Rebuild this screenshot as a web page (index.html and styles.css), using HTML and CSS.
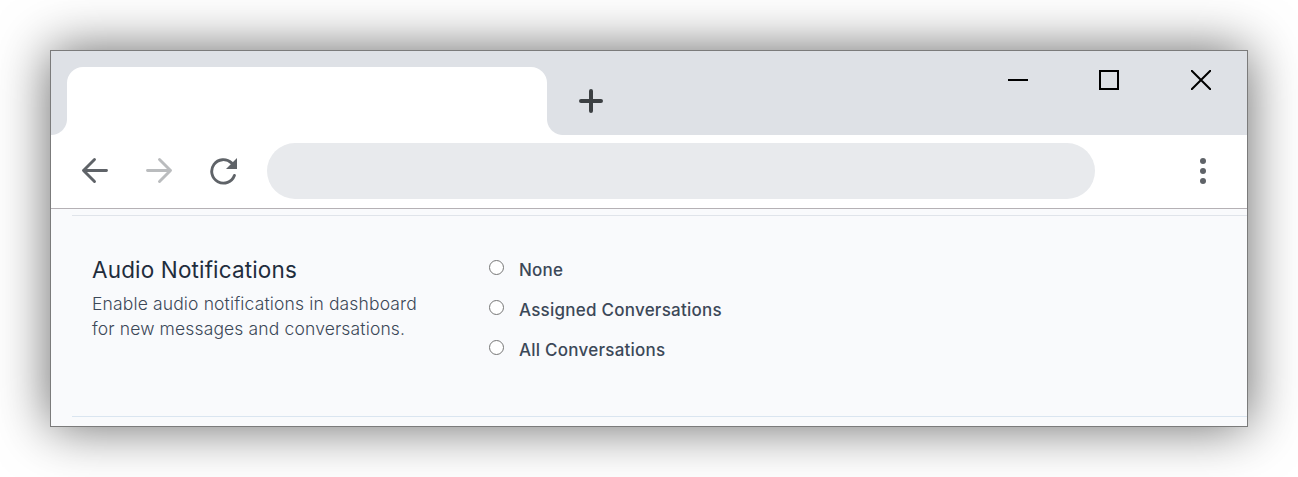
FILE: index.html
```html
<!DOCTYPE html>
<html lang="en">
<head>
<meta charset="utf-8">
<title>Audio Notifications</title>
<link rel="stylesheet" href="styles.css">
</head>
<body>
<div class="window">
  <div class="tabstrip">
    <div class="tab"></div>
    <svg class="new-tab" width="24" height="24" viewBox="0 0 24 24"><path d="M12 2v20M2 12h20"/></svg>
    <div class="controls">
      <svg width="20" height="20" viewBox="0 0 20 20"><path d="M0 10h20"/></svg>
      <svg width="20" height="20" viewBox="0 0 20 20"><path d="M1 1h18v18H1z"/></svg>
      <svg class="close" width="20" height="20" viewBox="0 0 20 20"><path d="M0 0l20 20M20 0L0 20"/></svg>
    </div>
  </div>
  <div class="toolbar">
    <svg class="nav" width="28" height="28" viewBox="0 0 28 28"><path d="M13.500 2.500L2.500 13.500l11 11M2.500 13.500h23"/></svg>
    <svg class="nav disabled" width="28" height="28" viewBox="0 0 28 28"><path d="M14.500 2.500L25.500 13.500l-11 11M25.500 13.500H2.500"/></svg>
    <svg class="nav" width="28" height="28" viewBox="0 0 28 28"><path d="M25.400 18.400A11.700 11.700 0 1 1 22.500 5.900"/><path class="head" d="M28 1v11H17z"/></svg>
    <div class="address"></div>
    <svg class="more" width="6" height="26" viewBox="0 0 6 26"><circle cx="3" cy="3" r="3"/><circle cx="3" cy="13" r="3"/><circle cx="3" cy="23" r="3"/></svg>
  </div>
  <div class="page">
    <section class="setting">
      <div class="about">
        <h4>Audio Notifications</h4>
        <p>Enable audio notifications in dashboard<br>for new messages and conversations.</p>
      </div>
      <div class="options">
        <label><span class="radio"></span><span>None</span></label>
        <label><span class="radio"></span><span>Assigned Conversations</span></label>
        <label><span class="radio"></span><span>All Conversations</span></label>
      </div>
    </section>
  </div>
</div>
</body>
</html>
```
FILE: styles.css
```css
* { box-sizing: border-box; }
body { margin: 0; padding: 50px; height: 477px; overflow: hidden; background: #fff; font-family: Inter, "Liberation Sans", sans-serif; }
svg { display: block; flex: none; }
.window { width: 1198px; height: 377px; border: 1px solid #7b7b7b; background: #f9fafc; box-shadow: 0 0 50px rgba(0,0,0,.6); display: flex; flex-direction: column; }
.tabstrip { height: 84px; flex: none; background: #dee1e6; display: flex; align-items: flex-start; padding: 16px 36px 0 16px; overflow: hidden; }
.tab { position: relative; width: 480px; height: 68px; background: #fff; border-radius: 16px 16px 0 0; }
.tab::before, .tab::after { content: ""; position: absolute; bottom: 0; width: 16px; height: 16px; }
.tab::before { left: -16px; background: radial-gradient(circle at 0 0, transparent 15.500px, #fff 16.500px); }
.tab::after { right: -16px; background: radial-gradient(circle at 100% 0, transparent 15.500px, #fff 16.500px); }
.new-tab { margin: 22px 0 0 32px; fill: none; stroke: #3c4043; stroke-width: 4; stroke-linecap: round; }
.controls { margin: 3px 0 0 auto; display: flex; gap: 71px; fill: none; stroke: #000; stroke-width: 2; }
.close { margin-left: 1px; }
.toolbar { height: 74px; flex: none; background: #fff; border-bottom: 1px solid #b5b1b5; display: flex; align-items: flex-start; padding: 8px 41px 0 30px; }
.nav { margin: 14px 36px 0 0; fill: none; stroke: #5f6368; stroke-width: 2.900; stroke-linecap: round; stroke-linejoin: round; }
.nav .head { fill: #5f6368; stroke: none; }
.disabled { stroke: #babcbe; }
.address { width: 828px; height: 56px; margin-left: -6px; border-radius: 28px; background: #e8eaed; }
.more { margin: 15px 0 0 auto; fill: #5f6368; }
.page { padding: 6px 0 0 21px; }
.setting { height: 202px; border-top: 1px solid #e0e4ea; border-bottom: 1px solid #dae5f0; padding: 40px 0 0 20px; display: flex; }
.about { width: 397px; }
h4 { margin: 0; font-size: 22.500px; line-height: 28px; font-weight: 400; letter-spacing: .15px; color: #1f2d3d; white-space: nowrap; }
p { margin: 7px 0 0; font-size: 17.500px; line-height: 25px; font-weight: 300; letter-spacing: .14px; color: #3c4858; white-space: nowrap; }
.options { display: flex; flex-direction: column; gap: 16px; }
label { display: flex; height: 24px; line-height: 28px; font-size: 17px; font-weight: 500; letter-spacing: .24px; color: #3c4858; }
label span { white-space: nowrap; }
.radio { width: 15px; height: 15px; margin: 4px 15px 0 0; border: 1px solid #767676; border-radius: 50%; background: #fff; }
```
